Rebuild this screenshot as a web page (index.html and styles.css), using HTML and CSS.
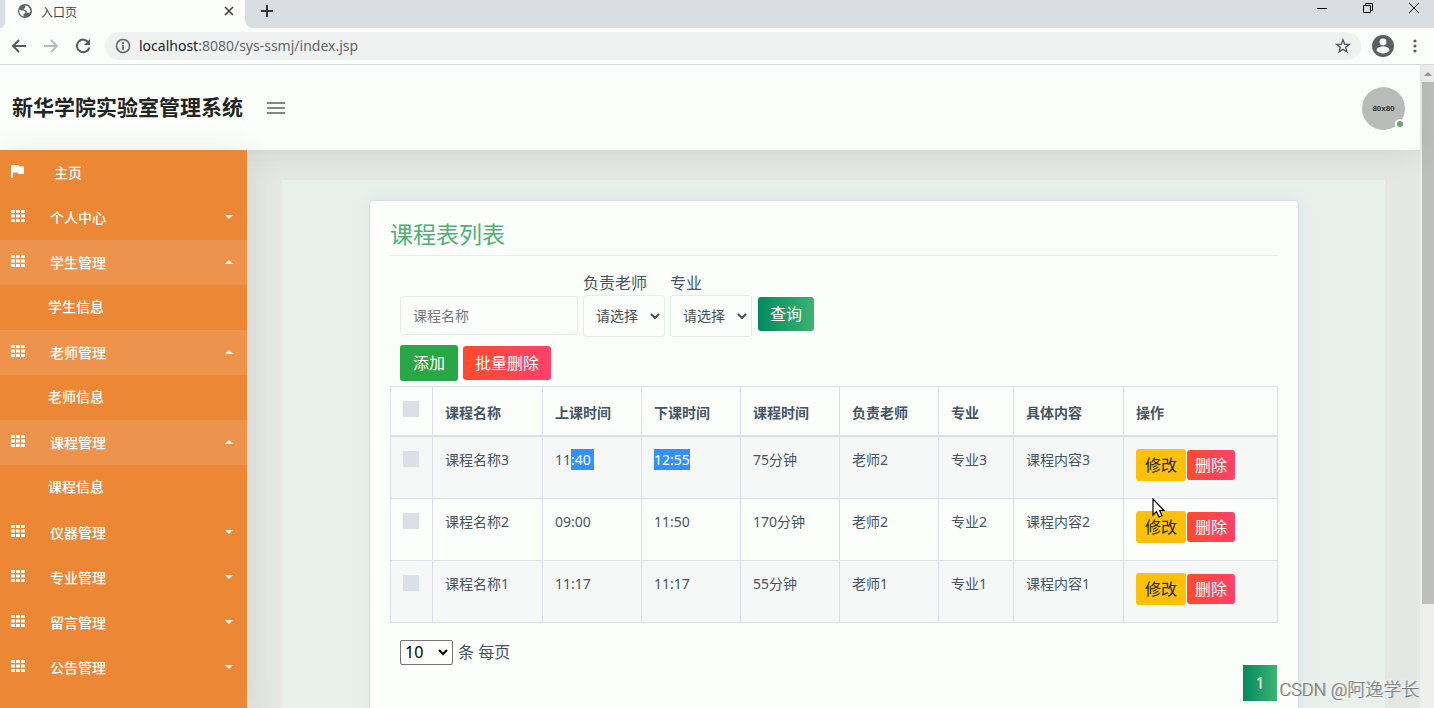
FILE: index.html
```html
<!DOCTYPE html>
<html lang="zh-CN">
<head>
<meta charset="utf-8">
<title>入口页</title>
<link rel="stylesheet" href="styles.css">
</head>
<body>
<svg class="defs" aria-hidden="true">
  <symbol id="grid" viewBox="0 0 14 12"><path fill="currentColor" d="M0 0h4v3H0zM5 0h4v3H5zM10 0h4v3h-4zM0 4.500h4v3H0zM5 4.500h4v3H5zM10 4.500h4v3h-4zM0 9h4v3H0zM5 9h4v3H5zM10 9h4v3h-4z"/></symbol>
  <symbol id="down" viewBox="0 0 8 4"><path fill="currentColor" d="M0 0h8L4 4z"/></symbol>
  <symbol id="up" viewBox="0 0 8 4"><path fill="currentColor" d="M0 4h8L4 0z"/></symbol>
</svg>
<div class="window">
  <div class="tabstrip">
    <span class="tab-edge"></span>
    <div class="tab">
      <svg class="globe" width="14" height="14" viewBox="0 0 14 14"><circle cx="7" cy="7" r="7" fill="#5f6368"/><path fill="#fcfefb" d="M1.500 5.500 4 6.500h2L7.500 8 7 9.500l-1.500.5v2.500C3 11.800 1.300 9.500 1.300 7zM7 1.500l3 .8L12 5l.5 2.500L11 9 8.500 8.500 9 7 7 6 5.500 5 7 4z"/></svg>
      <span class="tab-title">入口页</span>
      <button class="plain" aria-label="关闭标签页"><svg width="10" height="10" viewBox="0 0 10 10"><path d="m1 1 8 8M9 1 1 9" stroke="#3c4043" stroke-width="1.600"/></svg></button>
    </div>
    <button class="plain new-tab" aria-label="新标签页"><svg width="12" height="12" viewBox="0 0 12 12"><path d="M6 0v12M0 6h12" stroke="#333639" stroke-width="2"/></svg></button>
    <div class="window-controls">
      <button class="plain" aria-label="最小化"><svg width="12" height="12" viewBox="0 0 12 12"><path d="M1 6.500h10" stroke="#000"/></svg></button>
      <button class="plain" aria-label="还原"><svg width="12" height="12" viewBox="0 0 12 12"><path d="M1.500 3.500h7v7h-7zM3.500 3.500v-2h7v7h-2" fill="none" stroke="#000"/></svg></button>
      <button class="plain" aria-label="关闭"><svg width="12" height="12" viewBox="0 0 12 12"><path d="m1 1 10 10M11 1 1 11" stroke="#000"/></svg></button>
    </div>
  </div>
  <div class="toolbar">
    <button class="plain" aria-label="后退"><svg width="16" height="16" viewBox="0 0 16 16"><path d="M15 8H2M8 2 2 8l6 6" fill="none" stroke="#55595d" stroke-width="1.900"/></svg></button>
    <button class="plain" aria-label="前进"><svg width="16" height="16" viewBox="0 0 16 16"><path d="M1 8h13M8 2l6 6-6 6" fill="none" stroke="#b8babb" stroke-width="1.900"/></svg></button>
    <button class="plain" aria-label="刷新"><svg width="16" height="16" viewBox="0 0 16 16"><path d="M13.500 4.500A6.300 6.300 0 1 0 14.300 9.500" fill="none" stroke="#55595d" stroke-width="2"/><path d="M15 1v6H9z" fill="#55595d"/></svg></button>
    <div class="address">
      <svg width="16" height="16" viewBox="0 0 16 16"><circle cx="8" cy="8" r="6.500" fill="none" stroke="#5f6368" stroke-width="1.500"/><path d="M8 7v5M8 4v2" stroke="#5f6368" stroke-width="1.700"/></svg>
      <span class="url"><b>localhost</b>:8080/sys-ssmj/index.jsp</span>
      <button class="plain" aria-label="收藏"><svg width="16" height="16" viewBox="0 0 16 16"><path d="m8 1.800 1.700 4.400 4.600.2-3.600 2.900 1.200 4.500L8 11.300l-3.900 2.500 1.200-4.500-3.600-2.900 4.600-.2z" fill="none" stroke="#55595d" stroke-width="1.400"/></svg></button>
    </div>
    <button class="plain" aria-label="个人资料"><svg width="22" height="22" viewBox="0 0 22 22"><circle cx="11" cy="11" r="11" fill="#5a5f65"/><circle cx="11" cy="7" r="3.400" fill="#fcfefb"/><path d="M4.500 15.500c0-5.500 13-5.500 13 0-3 4-10 4-13 0z" fill="#fcfefb"/></svg></button>
    <button class="plain menu" aria-label="菜单"><svg width="4" height="14" viewBox="0 0 4 14"><g fill="#5a5f65"><circle cx="2" cy="2" r="1.600"/><circle cx="2" cy="7" r="1.600"/><circle cx="2" cy="12" r="1.600"/></g></svg></button>
  </div>
  <div class="viewport">
    <div class="page">
      <header class="header">
        <h1 class="brand">新华学院实验室管理系统</h1>
        <button class="plain" aria-label="折叠菜单"><svg width="18" height="12" viewBox="0 0 18 12"><path d="M0 1h18M0 6h18M0 11h18" stroke="#858785" stroke-width="2"/></svg></button>
        <div class="avatar">80x80<span class="status"></span></div>
      </header>
      <div class="body">
        <nav class="sidebar">
          <a class="item home" href="#"><svg width="13" height="13" viewBox="0 0 13 13"><path fill="currentColor" d="M0 0h7.500l.6 1.500H13V9H7.500L7 7.500H2V13H0z"/></svg><span>主页</span></a>
          <a class="item" href="#"><svg width="14" height="12"><use href="#grid"/></svg><span>个人中心</span><svg class="caret" width="8" height="4"><use href="#down"/></svg></a>
          <a class="item open" href="#"><svg width="14" height="12"><use href="#grid"/></svg><span>学生管理</span><svg class="caret" width="8" height="4"><use href="#up"/></svg></a>
          <a class="subitem" href="#">学生信息</a>
          <a class="item open" href="#"><svg width="14" height="12"><use href="#grid"/></svg><span>老师管理</span><svg class="caret" width="8" height="4"><use href="#up"/></svg></a>
          <a class="subitem" href="#">老师信息</a>
          <a class="item open" href="#"><svg width="14" height="12"><use href="#grid"/></svg><span>课程管理</span><svg class="caret" width="8" height="4"><use href="#up"/></svg></a>
          <a class="subitem" href="#">课程信息</a>
          <a class="item" href="#"><svg width="14" height="12"><use href="#grid"/></svg><span>仪器管理</span><svg class="caret" width="8" height="4"><use href="#down"/></svg></a>
          <a class="item" href="#"><svg width="14" height="12"><use href="#grid"/></svg><span>专业管理</span><svg class="caret" width="8" height="4"><use href="#down"/></svg></a>
          <a class="item" href="#"><svg width="14" height="12"><use href="#grid"/></svg><span>留言管理</span><svg class="caret" width="8" height="4"><use href="#down"/></svg></a>
          <a class="item" href="#"><svg width="14" height="12"><use href="#grid"/></svg><span>公告管理</span><svg class="caret" width="8" height="4"><use href="#down"/></svg></a>
        </nav>
        <main class="main">
          <div class="panel">
            <section class="card">
              <h2 class="title">课程表列表</h2>
              <form class="filters">
                <input class="field" type="text" placeholder="课程名称" aria-label="课程名称">
                <div class="group"><label for="teacher">负责老师</label><span class="picker"><select id="teacher"><option>请选择</option></select><svg width="10" height="7" viewBox="0 0 10 7"><path d="m1 1 4 4 4-4" fill="none" stroke="#495057" stroke-width="2"/></svg></span></div>
                <div class="group"><label for="major">专业</label><span class="picker"><select id="major"><option>请选择</option></select><svg width="10" height="7" viewBox="0 0 10 7"><path d="m1 1 4 4 4-4" fill="none" stroke="#495057" stroke-width="2"/></svg></span></div>
                <button class="btn green search" type="button">查询</button>
              </form>
              <div class="actions">
                <button class="btn add" type="button">添加</button>
                <button class="btn red" type="button">批量删除</button>
              </div>
              <table class="table">
                <colgroup><col class="w-check"><col class="w-name"><col class="w-mid"><col class="w-mid"><col class="w-mid"><col class="w-mid"><col class="w-major"><col class="w-name"><col></colgroup>
                <thead><tr><th><input type="checkbox" aria-label="全选"></th><th>课程名称</th><th>上课时间</th><th>下课时间</th><th>课程时间</th><th>负责老师</th><th>专业</th><th>具体内容</th><th>操作</th></tr></thead>
                <tbody>
                  <tr><td><input type="checkbox" aria-label="选择课程名称3"></td><td>课程名称3</td><td>11<span class="selected">:40&nbsp;</span></td><td><span class="selected">12:55</span></td><td>75分钟</td><td>老师2</td><td>专业3</td><td>课程内容3</td><td><div class="ops"><button class="btn small yellow">修改</button><button class="btn small red">删除</button></div></td></tr>
                  <tr><td><input type="checkbox" aria-label="选择课程名称2"></td><td>课程名称2</td><td>09:00</td><td>11:50</td><td>170分钟</td><td>老师2</td><td>专业2</td><td>课程内容2</td><td><div class="ops"><button class="btn small yellow">修改</button><button class="btn small red">删除</button><svg class="cursor" width="14" height="21" viewBox="0 0 14 21"><path d="M1 1v16l3.500-3.500L7 19l3-1.300L7.600 12.500H12z" fill="#fff" stroke="#000" stroke-width="1.200"/></svg></div></td></tr>
                  <tr><td><input type="checkbox" aria-label="选择课程名称1"></td><td>课程名称1</td><td>11:17</td><td>11:17</td><td>55分钟</td><td>老师1</td><td>专业1</td><td>课程内容1</td><td><div class="ops"><button class="btn small yellow">修改</button><button class="btn small red">删除</button></div></td></tr>
                </tbody>
              </table>
              <div class="per-page"><span class="picker size"><select id="size"><option>10</option></select><svg width="10" height="7" viewBox="0 0 10 7"><path d="m1 1 4 4 4-4" fill="none" stroke="#000" stroke-width="2"/></svg></span><label for="size">条 每页</label></div>
              <div class="pages"><button class="page-number green">1</button></div>
            </section>
          </div>
        </main>
      </div>
    </div>
    <div class="scrollbar"><svg width="8" height="4"><use href="#up"/></svg><div class="thumb"></div></div>
  </div>
  <div class="watermark">CSDN @阿逸学长</div>
</div>
</body>
</html>
```
FILE: styles.css
```css
* { box-sizing: border-box; }
body { margin: 0; font: 14px/21px "Noto Sans", "Noto Sans CJK SC", sans-serif; color: #455565; }
button, input, select { font: inherit; color: inherit; margin: 0; }
svg { display: block; flex: none; }
a { color: inherit; text-decoration: none; }
.defs { display: none; }
.window { position: relative; height: 100vh; display: flex; flex-direction: column; overflow: hidden; background: #fcfefb; }
.plain { border: 0; padding: 0; background: none; flex: none; }

.tabstrip { display: flex; height: 28px; flex: none; background: #dadde2; }
.tab-edge { width: 5px; background: #dadde2; border-bottom-right-radius: 5px; box-shadow: 2px 4px 0 #fcfefb; }
.tab { width: 240px; display: flex; align-items: center; gap: 9px; padding: 0 11px 6px 13px; background: #fcfefb; }
.tab-title { flex: 1; font-family: "Noto Sans CJK SC", sans-serif; font-size: 12px; color: #45484c; }
.new-tab { padding: 0 16px 6px; border-bottom-left-radius: 8px; background: #dadde2; box-shadow: -4px 4px 0 #fcfefb; }
.window-controls { margin-left: auto; display: flex; gap: 34px; padding: 0 14px 12px 0; }

.toolbar { position: relative; z-index: 3; display: flex; align-items: center; height: 37px; flex: none; gap: 16px; padding: 0 17px 0 11px; border-bottom: 1px solid #d5d7df; background: #fcfefb; }
.address { flex: 1; display: flex; align-items: center; gap: 8px; height: 28px; margin: 0 -5px 0 -2px; padding: 0 10px; border-radius: 14px; background: #f0f2f2; }
.url { flex: 1; padding-bottom: 1px; color: #62666a; }
.url b { font-weight: 400; color: #202124; }
.menu { margin-left: 3px; }

.viewport { flex: 1; display: flex; min-height: 0; }
.page { flex: 1; display: flex; flex-direction: column; min-width: 0; }
.header { position: relative; z-index: 1; display: flex; align-items: center; height: 85px; flex: none; padding: 1px 15px 0 12px; background: #fcfefb; box-shadow: 0 0 30px rgba(80, 80, 80, .15); }
.brand { margin: 0 24px 2px 0; font-size: 21px; line-height: 28px; font-weight: 700; color: #212421; }
.avatar { position: relative; margin-left: auto; width: 43px; height: 43px; border-radius: 50%; background: #b9bbb8; color: #333; font: 700 8px/43px "Liberation Sans", sans-serif; text-align: center; }
.status { position: absolute; right: 0; bottom: 1px; width: 10px; height: 10px; border: 2px solid #fcfefb; border-radius: 50%; background: #68a868; }
.body { flex: 1; display: flex; min-height: 0; }
.sidebar { position: relative; z-index: 2; width: 247px; flex: none; background: #ec8735; color: #fff; font-weight: 500; box-shadow: 0 6px 30px rgba(80, 80, 80, .15); }
.item { display: flex; align-items: center; height: 45px; gap: 25px; padding: 0 14px 0 11px; }
.item > svg { margin-bottom: 3px; }
.item.home { gap: 30px; }
.item.open { background: #ee934b; }
.item .caret { margin-left: auto; margin-bottom: 1px; }
.subitem { display: block; height: 45px; padding: 11px 48px; }

.main { flex: 1; min-width: 0; padding: 30px 35px 0; background: #e5e7e4; overflow: hidden; }
.panel { padding: 21px 87px 40px 88px; background: #e8f0eb; }
.card { padding: 20px; border-radius: 4px; background: #fcfefb; box-shadow: 0 0 15px rgba(150, 170, 210, .2), 0 0 0 1px #dee3ea; }
.title { margin: 0 0 15px; padding-bottom: 8px; border-bottom: 1px solid #e9ecea; font-size: 23px; line-height: 26px; font-weight: 400; color: #4ab375; }
.filters { display: flex; align-items: flex-end; gap: 5px; padding-left: 10px; }
.field, .picker select { border: 1px solid #e4eee9; border-radius: 3px; background: transparent; }
.field { width: 178px; height: 39px; margin-bottom: 2px; padding: 0 12px; }
.field::placeholder { color: #747b82; opacity: 1; }
.group { display: flex; flex-direction: column; font-size: 16px; line-height: 24px; }
.picker { position: relative; font-size: 14px; color: #495057; }
.picker select { display: block; appearance: none; width: 82px; height: 42px; padding: 0 12px; }
.picker svg { position: absolute; right: 5px; top: 50%; margin-top: -3px; pointer-events: none; }
.btn { height: 34px; padding: 0 12px; border: 0; border-radius: 3px; color: #fff; font-size: 16px; line-height: 24px; }
.green { background: linear-gradient(90deg, #038a60, #3cb371); }
.red { background: linear-gradient(90deg, #ff4b2b, #ff416c); }
.add { height: 36px; padding: 0 13px; background: #28a745; }
.yellow { background: #ffc107; color: #212529; }
.search { margin: 0 0 6px 1px; }
.actions { display: flex; align-items: center; gap: 5px; padding: 8px 10px 5px; }

.table { width: 100%; table-layout: fixed; border-collapse: collapse; }
.table th, .table td { height: 62px; padding: 12px; border: 1px solid #dcdfe5; text-align: left; vertical-align: top; }
.table th { height: 49px; padding: 15px 12px 11px; border-bottom-width: 2px; font-weight: 700; }
.table tbody tr:first-child td { height: 63px; }
.table tbody tr:nth-child(odd) { background: #f6f8f7; }
.table input { appearance: none; display: block; width: 16px; height: 16px; margin-top: 2px; background: #dce0e5; }
.table th input { margin-top: -1px; }
.w-check { width: 42px; }
.w-name { width: 110px; }
.w-mid { width: 99px; }
.w-major { width: 75px; }
.selected { display: inline-block; background: #3390ff; color: #fff; }
.ops { position: relative; display: flex; align-items: center; gap: 1px; }
.small { height: 30px; padding: 0 8px; }
.small.yellow { height: 32px; padding: 0 9px; }
.cursor { position: absolute; left: 16px; top: -13px; }

.per-page { display: flex; align-items: center; gap: 5px; padding: 16px 10px 0; font-size: 16px; line-height: 26px; }
.picker.size { font-size: 16px; color: #000; }
.picker.size select { width: 53px; height: 25px; padding: 0 4px 1px; border-color: #767676; border-radius: 2px; line-height: 22px; }
.pages { display: flex; justify-content: flex-end; padding-right: 1px; }
.page-number { width: 34px; height: 36px; padding: 0; border: 0; color: #fff; font-size: 16px; }

.scrollbar { display: flex; flex-direction: column; align-items: center; gap: 6px; width: 14px; padding: 7px 0 0 2px; background: #eff0ee; color: #969896; }
.thumb { width: 100%; height: 82%; flex: none; margin-bottom: auto; background: #bdbfbc; }
.watermark { position: absolute; right: 15px; bottom: 5px; font-family: Roboto, "Noto Sans CJK SC", sans-serif; font-size: 18px; line-height: 26px; font-weight: 300; color: #777978; text-shadow: -1px -1px 0 #fff, 1px 0 0 #a9abaa; }
```
